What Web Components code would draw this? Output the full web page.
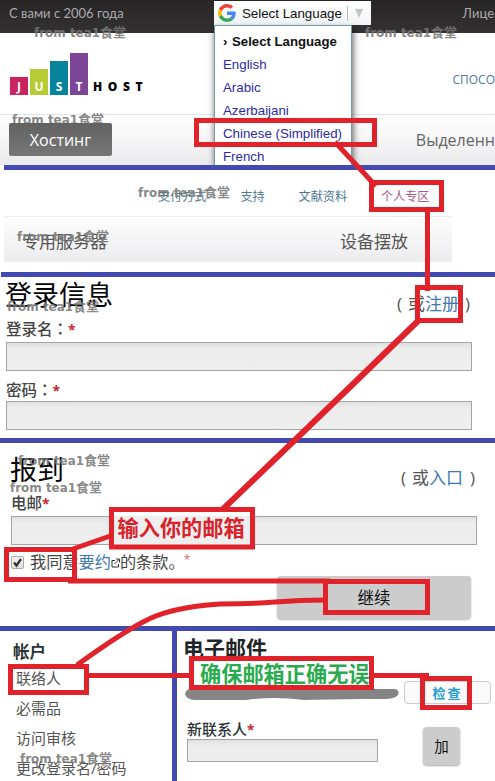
<!DOCTYPE html>
<html lang="zh-CN">
<head>
<meta charset="utf-8">
<title>JustHost</title>
<style>
html,body{margin:0;padding:0}
body{width:495px;height:781px;overflow:hidden;background:#fff;font-family:"Open Sans","Noto Sans CJK SC",sans-serif;color:#444}
</style>
</head>
<body>
<guide-page></guide-page>
<script>
const define = (name, html) => customElements.define(name, class extends HTMLElement {
  constructor() {
    super();
    this.attachShadow({mode: 'open'}).innerHTML = html;
  }
});

define('section-rule', `<style>:host{display:block;height:5px;background:#4249b0;flex:none}</style>`);

define('bar-logo', `<style>
:host{display:flex;align-items:flex-end;gap:2px;height:42px;font:700 12px/17px "Open Sans",sans-serif;color:#fff}
span{display:block;width:18px;box-sizing:border-box;text-align:center;display:flex;align-items:flex-end;justify-content:center}
.j{height:18px;background:#cb2360}.u{height:26px;background:#b6cb36}.s{height:34px;background:#07849b}.t{height:42px;background:#7d4596}
b{color:#000;letter-spacing:5.6px;margin-left:3px}
</style><span class="j">J</span><span class="u">U</span><span class="s">S</span><span class="t">T</span><b>HOST</b>`);

define('lang-picker', `<style>
:host{display:block;width:157px;font:13.3px/23px "Liberation Sans",sans-serif;color:#111}
.head{display:flex;align-items:center;height:24px;box-sizing:border-box;background:linear-gradient(#fff,#f2f4f5);padding:0 6px 0 4px}
svg{flex:none}.lab{margin-left:6px;white-space:nowrap;width:100px}
.sep{width:1px;height:15px;background:#bbb;margin:0 7px 0 5px}
.arrow{border:4.5px solid transparent;border-top:9px solid #c4c4c4;border-bottom:0}
.list{width:138px;height:140px;overflow:hidden;border:1px solid #6f9aae;border-bottom:0;box-sizing:border-box;background:#fff;padding:4px 0 0 8px;color:#2b2aa5;box-shadow:1px 4px 7px rgba(0,0,0,.65);white-space:nowrap}
.list b{color:#111;font-size:13.2px}.list div{height:23px}
i{font-style:normal;display:inline-block;width:9px;color:#111;font-weight:bold}
</style>
<div class="head"><svg width="18" height="18" viewBox="0 0 48 48"><path fill="#EA4335" d="M24 9.5c3.5 0 6.700 1.200 9.200 3.600l6.900-6.900C35.900 2.400 30.500 0 24 0 14.600 0 6.500 5.400 2.600 13.200l8 6.200C12.400 13.700 17.700 9.500 24 9.500z"/><path fill="#4285F4" d="M47 24.500c0-1.600-.2-3.100-.4-4.500H24v9h12.900c-.6 3-2.200 5.500-4.800 7.200l7.700 6C44.400 38 47 31.800 47 24.500z"/><path fill="#FBBC05" d="M10.500 28.600a14.500 14.500 0 010-9.200l-8-6.200a24 24 0 000 21.600z"/><path fill="#34A853" d="M24 48c6.500 0 11.900-2.100 15.900-5.800l-7.700-6C30 37.700 27.200 38.500 24 38.500c-6.300 0-11.600-4.200-13.500-9.900l-8 6.200C6.500 42.600 14.600 48 24 48z"/></svg><span class="lab">Select Language</span><span class="sep"></span><span class="arrow"></span></div>
<div class="list"><div><i>›</i><b>Select Language</b></div><div>English</div><div>Arabic</div><div>Azerbaijani</div><div>Chinese (Simplified)</div><div>French</div></div>`);

define('site-header', `<style>
:host{display:block;height:165px;position:relative;overflow:hidden}
.top{height:33px;background:linear-gradient(#282526,#343132);display:flex;justify-content:space-between;padding:0 1px 0 9px;font:13px/27px Lato,"Open Sans",sans-serif;color:#aaa;box-sizing:border-box}
.mid{height:81px;display:flex;justify-content:space-between;padding:20px 0 0 10px;box-sizing:border-box}
.mid span{font-size:12px;line-height:17px;color:#4a79a4;margin-top:18px}
.nav{height:51px;box-sizing:border-box;border-top:1px solid #dfe5e9;background:linear-gradient(#fff,#ebebed);padding:8px 0 0 9px;display:flex;justify-content:space-between}
.btn{width:103px;height:33px;background:linear-gradient(#626262,#777);border-radius:2px;color:#fff;font-size:16px;line-height:34px;text-align:center}
.nav span{font-size:16px;line-height:34px;color:#666}
lang-picker{position:absolute;left:214px;top:1px}
</style>
<div class="top"><span>С вами с 2006 года</span><span>Лице</span></div>
<div class="mid"><bar-logo></bar-logo><span>СПОСО</span></div>
<div class="nav"><div class="btn">Хостинг</div><span>Выделенн</span></div>
<lang-picker></lang-picker>`);

define('menu-strip', `<style>
:host{display:block;height:102px}
.links{height:46px;display:flex;font-size:12.1px;line-height:17px;color:#4b7890;padding:18px 0 0 158px;box-sizing:border-box;white-space:nowrap}
.links span:nth-child(2){margin-left:34px}.links span:nth-child(3){margin-left:34px}.links span:nth-child(4){margin-left:34px;color:#a35b83}
.bar{height:46px;width:448px;margin-left:4px;box-sizing:border-box;border-top:1px solid #ececef;background:linear-gradient(#fdfdfd,#ececee);padding:0 44px 0 18px;display:flex;justify-content:space-between;font-size:17px;line-height:50px;color:#555}
</style>
<div class="links"><span>支付方式</span><span>支持</span><span>文献资料</span><span>个人专区</span></div>
<div class="bar"><span>专用服务器</span><span>设备摆放</span></div>`);

define('text-field', `<style>
:host{display:block}
label{display:block;font-size:var(--fs,15.5px);line-height:20px;height:var(--lh,22px);font-weight:500;white-space:nowrap}
em{font:700 .9em/1 "Open Sans",sans-serif;color:#c8262c}
.box{height:var(--bh,29px);width:var(--bw,466px);box-sizing:border-box;border:1px solid #a4a4a4;background:linear-gradient(#e0e0e0,#ededed 6px,#eee)}
</style><label><slot></slot><em>*</em></label><div class="box"></div>`);

define('login-form', `<style>
:host{display:block;height:161px;box-sizing:border-box;padding:3px 25px 0 6px}
.row{display:flex;justify-content:space-between;height:38px}
h1{font-weight:400;font-size:27px;line-height:29px;margin:0 0 0 -1px;color:#050505}
p{margin:12px 0 0;font-size:17px;line-height:24px;color:#555;white-space:nowrap}a{color:#3b78ad}
.l{margin-right:6px}.r{margin-left:6px}
text-field+text-field{margin-top:8px}
.c{font-family:"Noto Sans CJK TC",sans-serif}
</style>
<div class="row"><h1>登录信息</h1><p><span class="l">(</span>或<a>注册</a><span class="r">)</span></p></div>
<text-field style="--lh:24px">登录名<span class="c" lang="zh-TW">：</span></text-field><text-field style="--lh:22px">密码<span class="c" lang="zh-TW">：</span></text-field>`);

define('signup-form', `<style>
:host{display:block;height:183px;box-sizing:border-box;padding:12px 18px 0 11px}
.row{display:flex;justify-content:space-between;height:38px}
h1{font-weight:400;font-size:27px;line-height:30px;margin:0 0 0 -1px;color:#050505}
p{margin:11px 2px 0 0;font-size:17px;line-height:24px;color:#555;white-space:nowrap}a{color:#3b78ad}
.l{margin-right:6px}.r{margin-left:7px}
.agree{display:flex;align-items:center;height:28px;margin-top:3px;font-size:16.2px;color:#444;white-space:nowrap}
.cb{width:11px;height:11px;border:1px solid #aaa;border-radius:2px;background:linear-gradient(#f5f5f5,#ddd);margin-right:6px;flex:none}
.cb svg{display:block}.agree div{margin-top:-2px}.agree em{font:12px/16px "Open Sans",sans-serif;color:#d66;margin-left:-1px;margin-top:-5px}
.btn{width:194px;height:43px;background:#ccc;border-radius:4px;box-shadow:0 1px 2px #bbb;margin:0 6px 0 auto;text-align:center;font-size:16.5px;line-height:43px;color:#111}
</style>
<div class="row"><h1>报到</h1><p><span class="l">(</span>或<a>入口</a><span class="r">)</span></p></div>
<text-field style="--lh:23px">电邮</text-field>
<div class="agree"><span class="cb"><svg width="11" height="11"><path d="M2 5.500L4.500 8.500L9 2" fill="none" stroke="#333" stroke-width="2.300"/></svg></span><div>我同意<a>要约</a><svg width="9" height="10" viewBox="0 0 9 10"><path d="M4 2.500H1v6.500h6.500V6M5 1h3.500v3.500M8.300 1.200L3.500 6" fill="none" stroke="#333"/></svg>的条款。</div><em>*</em></div>
<div class="btn">继续</div>`);

define('account-panel', `<style>
:host{display:flex;height:150px;overflow:hidden}
nav{width:172px;padding:10px 0 0 16px;box-sizing:border-box;font-size:15px;line-height:30px;color:#555;white-space:nowrap}
nav b{display:block;font-size:16.5px;line-height:22px;margin-left:-3px;color:#2c3335;font-weight:700}
.v{width:5px;background:#4249b0}
main{flex:1;padding:4px 0 0 6px}
h2{font-size:21px;line-height:26px;height:26px;margin:0;color:#1d2529}
.line{display:flex;height:24px;margin-top:20px;justify-content:space-between;padding-right:4px}
.smear{margin-left:1px}
.check{width:85px;height:21px;margin-top:0;border:1px solid #ccc;border-radius:4px;background:#fafafa;color:#249dd2;text-align:center;font:700 13px/22px "Noto Sans CJK SC",sans-serif;letter-spacing:2px}
.new{display:flex;justify-content:space-between;padding:13px 35px 0 4px;color:#2c3335}
.btn{width:37px;height:38px;background:#ccc;border-radius:4px;box-shadow:0 1px 2px #aaa;text-align:center;line-height:40px;font-size:14.5px;margin-top:9px;color:#111}
.new text-field{margin-top:1px}
</style>
<nav><b>帐户</b><div>联络人</div><div>必需品</div><div>访问审核</div><div>更改登录名/密码</div></nav><div class="v"></div>
<main><h2>电子邮件</h2>
<div class="line"><svg class="smear" width="216" height="26"><path d="M7 8H211Q216 9 214 14Q211 18 200 18L180 18Q160 18 120 19Q90 15 62 19H10Q2 18 1 13Q2 8 7 8Z" fill="#858585"/></svg><div class="check">检查</div></div>
<div class="new"><text-field style="--fs:15px;--lh:20px;--bh:23px;--bw:191px">新联系人</text-field><div class="btn">加</div></div></main>`);

define('guide-overlay', `<style>
:host{position:absolute;left:0;top:0;width:495px;height:781px;pointer-events:none}
svg{display:block}
.r{fill:none;stroke:#e0222b;stroke-width:5;stroke-linejoin:miter}
.n{font:700 21.2px "Noto Sans CJK SC",sans-serif}
</style>
<svg width="495" height="781">
<g class="r">
<rect x="196.500" y="120.500" width="178" height="24"/>
<path d="M335 142L374 184L376 186"/>
<rect x="371.500" y="182.500" width="70" height="27"/>
<path d="M427.500 209V291"/>
<rect x="417.500" y="287.500" width="43" height="33"/>
<path d="M419 320L350 387L220 512" stroke-width="6"/>
<path d="M113 535L70 550"/>
<rect x="6.500" y="549.500" width="68" height="30"/>
<path d="M68 581H330"/>
<rect x="325.500" y="581.500" width="102" height="31"/>
<path d="M325 600Q300 600 275 602T220 604Q170 607 143 622Q120 634 77 665"/>
<rect x="10.500" y="666.500" width="76" height="26"/>
<path d="M88 675.500H193M373 675.500H429"/>
</g>
<rect x="111.500" y="509.500" width="141" height="37.500" class="r" style="fill:#eee"/>
<rect x="114" y="512" width="136" height="4" fill="#fff"/>
<text class="n" x="117.500" y="536" fill="#d9222b">输入你的邮箱</text>
<rect x="191.500" y="658.500" width="180" height="29" class="r" style="fill:#fff"/>
<text class="n" x="200" y="681.500" fill="#2aab50">确保邮箱正确无误</text>
<rect x="422.500" y="678.500" width="47" height="29" class="r"/>
</svg>`);

customElements.define('water-marks', class extends HTMLElement {
  constructor() {
    super();
    const spots = [[34,37],[365,37],[12,124],[138,197],[17,241],[7,311],[18,465],[10,492],[20,763]];
    this.attachShadow({mode:'open'}).innerHTML = `<style>
:host{position:absolute;left:0;top:0;width:495px;height:781px;pointer-events:none}
text{font:700 12px "DejaVu Sans",sans-serif;fill:#777;fill-opacity:.9}
tspan{font:700 13px "Noto Sans CJK SC",sans-serif}</style>
<svg width="495" height="781"><defs><clipPath id="a"><path d="M0 0H495V123H0ZM0 156H495V781H0Z"/></clipPath></defs><g clip-path="url(#a)">` +
      spots.map(([x,y]) => `<text x="${x}" y="${y}" textLength="92" lengthAdjust="spacingAndGlyphs">from tea1<tspan>食堂</tspan></text>`).join('') + `</g></svg>`;
  }
});

define('guide-page', `<style>:host{display:flex;flex-direction:column;position:relative;width:495px;height:781px}
.a{margin-left:4px}.b{margin-left:1px}</style>
<site-header></site-header><section-rule class="a"></section-rule>
<menu-strip></menu-strip><section-rule class="b"></section-rule>
<login-form></login-form><section-rule></section-rule>
<signup-form></signup-form><section-rule></section-rule>
<account-panel></account-panel>
<water-marks></water-marks><guide-overlay></guide-overlay>`);
</script>
</body>
</html>
